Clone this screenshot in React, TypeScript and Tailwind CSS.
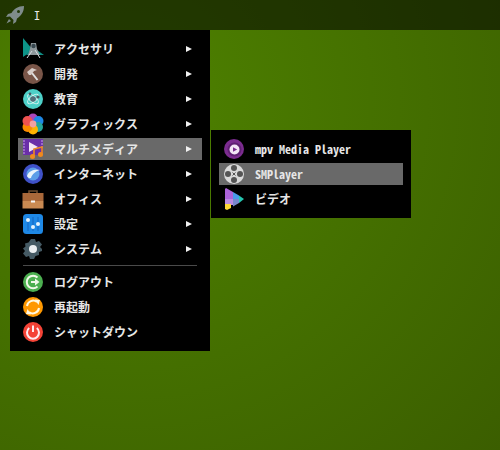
import React from 'react';

const FONT = "font-['Noto_Sans_Mono_CJK_JP','Liberation_Mono','Noto_Sans_CJK_JP',monospace]";

const Accessory = () => (
  <svg viewBox="0 0 22 22" className="w-[22px] h-[22px]">
    <path d="M1 0 L1 19 L11 12 Z" fill="#0d9488" />
    <path d="M4 17 L22 17 L12 10 Z" fill="#0f8f86" />
    <path d="M9 5 h5 l1 6 l3 6 h-12 l2 -6 Z" fill="#8f989c" />
    <circle cx="11.5" cy="8" r="2.2" fill="#37474f" />
    <path d="M5 20 L10 13 M18 20 L13 12" stroke="#d5dde0" strokeWidth="1" />
  </svg>
);

const Dev = () => (
  <svg viewBox="0 0 22 22" className="w-[22px] h-[22px]">
    <circle cx="11" cy="11" r="10" fill="#795548" />
    <path d="M15.5 17 L10 10" stroke="#e0e0e0" strokeWidth="2" />
    <path d="M5 9 L10 5 L15 7 L12 8 L9 12 L7 12 Z" fill="#d7ccc8" />
  </svg>
);

const Education = () => (
  <svg viewBox="0 0 22 22" className="w-[22px] h-[22px]">
    <circle cx="11" cy="11" r="10" fill="#4dd0c8" />
    <ellipse cx="11" cy="11" rx="6.5" ry="3" fill="none" stroke="#d8f3f0" strokeWidth="1" transform="rotate(40 11 11)" />
    <ellipse cx="11" cy="11" rx="6.5" ry="3" fill="none" stroke="#d8f3f0" strokeWidth="1" transform="rotate(-40 11 11)" />
    <circle cx="11" cy="11" r="2.8" fill="#546e7a" />
    <circle cx="16" cy="9" r="1.6" fill="#455a64" />
    <circle cx="8" cy="6" r="1.4" fill="#455a64" />
  </svg>
);

const Graphics = () => (
  <svg viewBox="0 0 22 22" className="w-[22px] h-[22px]">
    <circle cx="11" cy="5.5" r="5" fill="#ab47bc" />
    <circle cx="16.5" cy="8" r="5" fill="#1e88e5" />
    <circle cx="16" cy="14" r="5" fill="#26a69a" />
    <circle cx="11" cy="16.5" r="5" fill="#ffb300" />
    <circle cx="5.5" cy="14" r="5" fill="#fb8c00" />
    <circle cx="5.5" cy="8" r="5" fill="#ef5350" />
    <circle cx="11" cy="11" r="3.4" fill="#f4a0a0" />
  </svg>
);

const Multimedia = () => (
  <svg viewBox="0 0 22 22" className="w-[22px] h-[22px]">
    <rect x="1" y="1" width="20" height="16" fill="#6a2fa8" />
    <path d="M1 3 h2 M1 6 h2 M1 9 h2 M1 12 h2 M1 15 h2" stroke="#c9a4e8" strokeWidth="1" />
    <path d="M19 3 h2 M19 6 h2 M19 9 h2" stroke="#c9a4e8" strokeWidth="1" />
    <path d="M7 4 L16 9 L7 14 Z" fill="#f3e5f5" />
    <path d="M12 18 V11 L20 9 V16" fill="none" stroke="#f08a1d" strokeWidth="1.6" />
    <circle cx="10.5" cy="18.5" r="2.5" fill="#f08a1d" />
    <circle cx="18.5" cy="16.5" r="2.5" fill="#f08a1d" />
  </svg>
);

const Internet = () => (
  <svg viewBox="0 0 22 22" className="w-[22px] h-[22px]">
    <circle cx="11" cy="11" r="10" fill="#3f51c8" />
    <circle cx="11" cy="11" r="6.5" fill="#5c9ee8" />
    <path d="M5 13 C7 7 13 6 18 7 C14 8 10 11 9 15 C7 15.5 5.5 14.5 5 13 Z" fill="#eaf4fb" />
  </svg>
);

const Office = () => (
  <svg viewBox="0 0 22 20" className="w-[22px] h-[20px]">
    <path d="M7 5 V2 h8 V5" fill="none" stroke="#6d4c2f" strokeWidth="1.6" />
    <rect x="0.5" y="4" width="21" height="8" fill="#a9683a" />
    <rect x="0.5" y="12" width="21" height="7.5" fill="#c98a52" />
    <rect x="9" y="11.5" width="4" height="2" fill="#f5f5f5" />
  </svg>
);

const Settings = () => (
  <svg viewBox="0 0 22 22" className="w-[22px] h-[22px]">
    <rect x="1" y="1" width="20" height="20" rx="3.5" fill="#1e88e5" />
    <path d="M6 4 V18 M11 4 V18 M16 4 V18" stroke="#1565c0" strokeWidth="1" />
    <circle cx="6" cy="7" r="2" fill="#e3f2fd" />
    <circle cx="11" cy="14" r="2" fill="#e3f2fd" />
    <circle cx="16" cy="11" r="2" fill="#e3f2fd" />
  </svg>
);

const System = () => (
  <svg viewBox="0 0 22 22" className="w-[22px] h-[22px]">
    <path
      d="M9 1 h4 l1 3 l3 -1 l3 3.5 l-2 2.5 l2 2 v2 l-3 1 l0 3 l-3.5 1 l-1.5 3 h-4 l-1 -3 l-3 1 l-3 -3.5 l2 -2.5 l-2 -2.5 l2.5 -2 l-0.5 -3 l3.5 -1 Z"
      fill="#455a64"
    />
    <circle cx="11" cy="11" r="4" fill="#eceff1" />
  </svg>
);

const Logout = () => (
  <svg viewBox="0 0 22 22" className="w-[22px] h-[22px]">
    <circle cx="11" cy="11" r="10" fill="#4caf50" />
    <path d="M15.5 6.5 A6.3 6.3 0 1 0 15.5 15.5" fill="none" stroke="#f1f8e9" strokeWidth="2" />
    <path d="M9 11 H14" stroke="#f1f8e9" strokeWidth="2" />
    <path d="M13 7.5 L17.5 11 L13 14.5 Z" fill="#f1f8e9" />
  </svg>
);

const Reboot = () => (
  <svg viewBox="0 0 22 22" className="w-[22px] h-[22px]">
    <circle cx="11" cy="11" r="10" fill="#ff9800" />
    <path d="M5 10 A6.2 6.2 0 0 1 15 6" fill="none" stroke="#fff8e1" strokeWidth="2" />
    <path d="M17 12 A6.2 6.2 0 0 1 7 16" fill="none" stroke="#fff8e1" strokeWidth="2" />
    <path d="M13 3.5 L18 4 L16.5 9 Z M9 18.5 L4 18 L5.5 13 Z" fill="#fff8e1" />
  </svg>
);

const Shutdown = () => (
  <svg viewBox="0 0 22 22" className="w-[22px] h-[22px]">
    <circle cx="11" cy="11" r="10" fill="#f44336" />
    <path d="M7.2 7 A6 6 0 1 0 14.8 7" fill="none" stroke="#ffebee" strokeWidth="2" />
    <path d="M11 4.5 V11" stroke="#ffebee" strokeWidth="2" />
  </svg>
);

const Mpv = () => (
  <svg viewBox="0 0 22 22" className="w-[22px] h-[22px]">
    <circle cx="11" cy="11" r="10" fill="#7b2c8f" />
    <circle cx="11.5" cy="11.5" r="7" fill="#5f1f72" />
    <circle cx="11.5" cy="11.5" r="5" fill="#f3e5f5" />
    <path d="M10 9.2 L14.2 11.5 L10 13.8 Z" fill="#7b2c8f" />
  </svg>
);

const SMPlayer = () => (
  <svg viewBox="0 0 22 22" className="w-[22px] h-[22px]">
    <circle cx="11" cy="11" r="10" fill="#dadada" />
    <circle cx="11" cy="5" r="3" fill="#555555" />
    <circle cx="11" cy="17" r="3" fill="#555555" />
    <circle cx="5" cy="11" r="3" fill="#555555" />
    <circle cx="17" cy="11" r="3" fill="#555555" />
    <path d="M9.5 9.5 L12.5 12.5 M12.5 9.5 L9.5 12.5" stroke="#555555" strokeWidth="1" />
  </svg>
);

const Video = () => (
  <svg viewBox="0 0 22 22" className="w-[22px] h-[22px]">
    <path d="M3 0 L10 4 V11 H2 V1 Z" fill="#ab63d8" />
    <path d="M2 11 H10 V17 H2 Z" fill="#b98ae0" />
    <path d="M2 16 H8 V20 L4 22 L2 21 Z" fill="#fdd835" />
    <path d="M10 4 L16 7.5 V11 H10 Z" fill="#4a9be8" />
    <path d="M10 11 H16 V15 L10 18.5 Z" fill="#7986cb" />
    <path d="M16 7.5 L21 11 L16 15 Z" fill="#26c6b0" />
  </svg>
);

type Item = { label: string; icon: React.ReactNode; arrow?: boolean; active?: boolean };

const MAIN_ITEMS: Item[] = [
  { label: 'アクセサリ', icon: <Accessory />, arrow: true },
  { label: '開発', icon: <Dev />, arrow: true },
  { label: '教育', icon: <Education />, arrow: true },
  { label: 'グラフィックス', icon: <Graphics />, arrow: true },
  { label: 'マルチメディア', icon: <Multimedia />, arrow: true, active: true },
  { label: 'インターネット', icon: <Internet />, arrow: true },
  { label: 'オフィス', icon: <Office />, arrow: true },
  { label: '設定', icon: <Settings />, arrow: true },
  { label: 'システム', icon: <System />, arrow: true },
];

const SESSION_ITEMS: Item[] = [
  { label: 'ログアウト', icon: <Logout /> },
  { label: '再起動', icon: <Reboot /> },
  { label: 'シャットダウン', icon: <Shutdown /> },
];

const SUB_ITEMS: Item[] = [
  { label: 'mpv Media Player', icon: <Mpv /> },
  { label: 'SMPlayer', icon: <SMPlayer />, active: true },
  { label: 'ビデオ', icon: <Video /> },
];

const MenuRow = ({ item }: { item: Item }) => (
  <div className={`flex items-center h-[22px] pl-[4px] pr-[10px] ${item.active ? 'bg-[#696969]' : ''}`}>
    <span className="w-[22px] flex justify-center shrink-0">{item.icon}</span>
    <span className="ml-[10px] flex-1 text-[12px] leading-[22px] font-bold text-[#e6e6e6]">{item.label}</span>
    {item.arrow && <span className="w-0 h-0 border-y-[3px] border-y-transparent border-l-[6px] border-l-[#f0f0f0]" />}
  </div>
);

const Rocket = () => (
  <svg viewBox="0 0 20 20" className="w-[20px] h-[20px]">
    <path d="M19 1 C13 1 9 4 6.5 8 L3 9 L1 12 L5 11.5 L8.5 15 L8 19 L11 17 L12 13.5 C16 11 19 7 19 1 Z" fill="#7f8c8a" />
    <circle cx="13.5" cy="6.5" r="1.5" fill="#22380a" />
    <path d="M4 14 L1.5 18.5 L6 16 Z" fill="#7f8c8a" />
  </svg>
);

export default function App() {
  return (
    <div className={`relative w-[500px] h-[450px] overflow-hidden bg-[radial-gradient(circle_at_130px_100px,#4e8200_0,#3b5e00_510px)] ${FONT}`}>
      <div className="h-[30px] flex items-center bg-black/55 pl-[5px]">
        <Rocket />
        <span className="ml-[9px] text-[12px] text-[#e8e8e8]">I</span>
      </div>

      <div className="absolute left-[10px] top-[30px] w-[200px] h-[321px] bg-black pt-[8px] px-[8px]">
        <div className="flex flex-col gap-[3px]">
          {MAIN_ITEMS.map((item) => (
            <MenuRow key={item.label} item={item} />
          ))}
        </div>
        <div className="h-px mx-[5px] my-[5px] bg-[#4a4a4a]" />
        <div className="flex flex-col gap-[3px]">
          {SESSION_ITEMS.map((item) => (
            <MenuRow key={item.label} item={item} />
          ))}
        </div>
      </div>

      <div className="absolute left-[211px] top-[130px] w-[200px] h-[88px] bg-black pt-[8px] px-[8px]">
        <div className="flex flex-col gap-[3px]">
          {SUB_ITEMS.map((item) => (
            <MenuRow key={item.label} item={item} />
          ))}
        </div>
      </div>
    </div>
  );
}
